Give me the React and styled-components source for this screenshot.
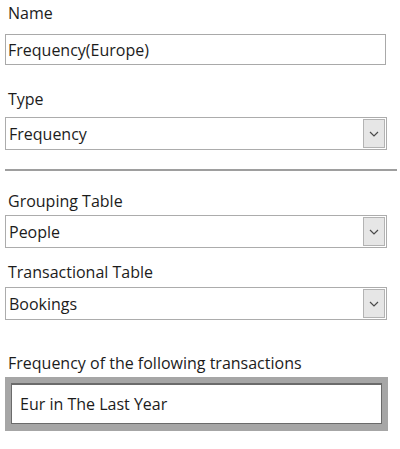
import styled, { createGlobalStyle } from 'styled-components'

const GlobalStyle = createGlobalStyle`
  body {
    margin: 0;
    background: #ffffff;
    font-family: 'Open Sans', 'Noto Sans', sans-serif;
    color: #1c1c1c;
  }
`

const Form = styled.div`
  width: 400px;
  padding-top: 3px;
  display: flex;
  flex-direction: column;
`

const Field = styled.div`
  display: flex;
  flex-direction: column;
  margin-top: ${({ $top }) => $top || 0}px;
  gap: ${({ $gap }) => $gap || 6}px;
`

const Label = styled.label`
  font-size: 16px;
  line-height: 20px;
  height: 20px;
  padding-left: 8px;
  color: #1c1c1c;
`

const TextInput = styled.input`
  box-sizing: border-box;
  margin: 0 0 0 5px;
  width: 381px;
  height: 31px;
  border: 1px solid #a9a9a9;
  padding: 0 0 0 2px;
  font-family: 'Open Sans', 'Noto Sans', sans-serif;
  font-size: 16px;
  color: #1c1c1c;
  background: #fff;
  outline: none;
`

const Select = styled.div`
  box-sizing: border-box;
  margin-left: 5px;
  width: 382px;
  height: 33px;
  border: 1px solid #acacac;
  display: flex;
  align-items: center;
  justify-content: space-between;
  padding: 0 1px 0 3px;
  background: #fff;
`

const SelectText = styled.span`
  font-size: 16px;
  line-height: 20px;
  color: #1c1c1c;
`

const DropButton = styled.div`
  box-sizing: border-box;
  width: 22px;
  height: 29px;
  background: #e6e6e6;
  border: 1px solid #b3b3b3;
  display: flex;
  align-items: center;
  justify-content: center;
`

const Divider = styled.hr`
  margin: 19px 0 0 5px;
  width: 392px;
  height: 0;
  border: none;
  border-top: 2px solid #9e9e9e;
`

const Frame = styled.div`
  box-sizing: border-box;
  margin-left: 5px;
  width: 383px;
  height: 54px;
  border: 6px solid #a6a6a6;
  border-bottom-width: 7px;
  background: #a6a6a6;
`

const FrameInner = styled.div`
  box-sizing: border-box;
  height: 100%;
  border: 1px solid #6b6b6b;
  border-top-width: 2px;
  background: #fff;
  padding-left: 8px;
  display: flex;
  align-items: center;
  font-size: 16px;
  color: #1c1c1c;
`

function Chevron() {
  return (
    <svg width="10" height="6" viewBox="0 0 10 6">
      <path d="M1 1 L5 5 L9 1" fill="none" stroke="#4a4a4a" strokeWidth="1.2" />
    </svg>
  )
}

function Dropdown({ value }) {
  return (
    <Select>
      <SelectText>{value}</SelectText>
      <DropButton>
        <Chevron />
      </DropButton>
    </Select>
  )
}

export default function App() {
  return (
    <>
      <GlobalStyle />
      <Form>
        <Field $gap={11}>
          <Label>Name</Label>
          <TextInput readOnly value="Frequency(Europe)" />
        </Field>
        <Field $top={24} $gap={8}>
          <Label>Type</Label>
          <Dropdown value="Frequency" />
        </Field>
        <Divider />
        <Field $top={20} $gap={4}>
          <Label>Grouping Table</Label>
          <Dropdown value="People" />
        </Field>
        <Field $top={14} $gap={5}>
          <Label>Transactional Table</Label>
          <Dropdown value="Bookings" />
        </Field>
        <Field $top={33} $gap={4}>
          <Label>Frequency of the following transactions</Label>
          <Frame>
            <FrameInner>Eur in The Last Year</FrameInner>
          </Frame>
        </Field>
      </Form>
    </>
  )
}
